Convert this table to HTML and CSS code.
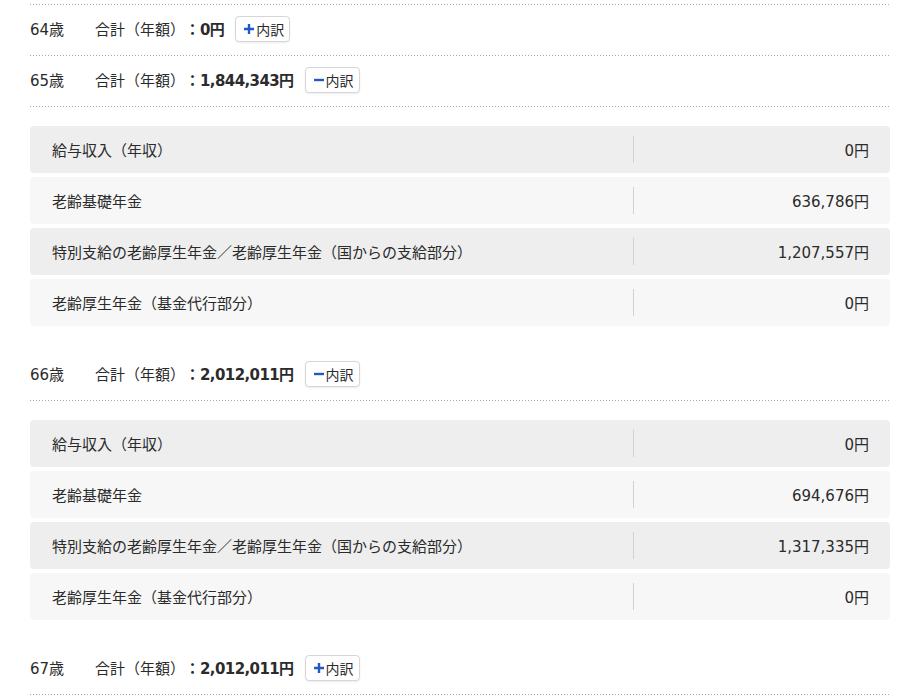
FILE: index.html
```html
<!DOCTYPE html>
<html lang="ja">
<head>
<meta charset="utf-8">
<title>年金内訳</title>
<link rel="stylesheet" href="styles.css">
</head>
<body>
<div class="page">
  <div class="sep"></div>

  <div class="head">
    <span class="age">64歳</span>
    <span class="lbl">合計（年額）</span><span class="colon">：</span><b class="amt">0円</b>
    <button class="btn"><svg class="ico" viewBox="0 0 10 10"><path d="M0 5H10M5 0V10"/></svg>内訳</button>
  </div>
  <div class="sep"></div>

  <div class="head">
    <span class="age">65歳</span>
    <span class="lbl">合計（年額）</span><span class="colon">：</span><b class="amt">1,844,343円</b>
    <button class="btn"><svg class="ico" viewBox="0 0 10 10"><path d="M0 5H10"/></svg>内訳</button>
  </div>
  <div class="sep"></div>
  <div class="table">
    <div class="row odd"><div class="name">給与収入（年収）</div><div class="val">0円</div></div>
    <div class="row even"><div class="name">老齢基礎年金</div><div class="val">636,786円</div></div>
    <div class="row odd"><div class="name">特別支給の老齢厚生年金／老齢厚生年金（国からの支給部分）</div><div class="val">1,207,557円</div></div>
    <div class="row even"><div class="name">老齢厚生年金（基金代行部分）</div><div class="val">0円</div></div>
  </div>

  <div class="head">
    <span class="age">66歳</span>
    <span class="lbl">合計（年額）</span><span class="colon">：</span><b class="amt">2,012,011円</b>
    <button class="btn"><svg class="ico" viewBox="0 0 10 10"><path d="M0 5H10"/></svg>内訳</button>
  </div>
  <div class="sep"></div>
  <div class="table">
    <div class="row odd"><div class="name">給与収入（年収）</div><div class="val">0円</div></div>
    <div class="row even"><div class="name">老齢基礎年金</div><div class="val">694,676円</div></div>
    <div class="row odd"><div class="name">特別支給の老齢厚生年金／老齢厚生年金（国からの支給部分）</div><div class="val">1,317,335円</div></div>
    <div class="row even"><div class="name">老齢厚生年金（基金代行部分）</div><div class="val">0円</div></div>
  </div>

  <div class="head">
    <span class="age">67歳</span>
    <span class="lbl">合計（年額）</span><span class="colon">：</span><b class="amt">2,012,011円</b>
    <button class="btn"><svg class="ico" viewBox="0 0 10 10"><path d="M0 5H10M5 0V10"/></svg>内訳</button>
  </div>
  <div class="sep"></div>
</div>
</body>
</html>
```

FILE: styles.css
```css
html, body {
  margin: 0;
  padding: 0;
  background: #fff;
}
body {
  font-family: "DejaVu Sans", "Noto Sans CJK JP", sans-serif;
  font-size: 15px;
  color: #2b2b2b;
}
.page {
  width: 860px;
  margin-left: 30px;
  padding-top: 4px;
}
.sep {
  height: 1px;
  background: repeating-linear-gradient(to right, #a8a8a8 0 1px, transparent 1px 3px);
}
.head {
  box-sizing: border-box;
  height: 50px;
  padding-bottom: 3px;
  display: flex;
  align-items: center;
  white-space: nowrap;
}
.age {
  width: 65px;
  flex: none;
}
.colon {
  font-weight: bold;
}
.amt {
  font-weight: bold;
  letter-spacing: -0.6px;
}
.btn {
  margin-left: 11px;
  height: 26px;
  padding: 0 5px 0 8px;
  display: inline-flex;
  align-items: center;
  background: #fff;
  border: 1px solid #d6d6d6;
  border-radius: 4px;
  box-shadow: 0 1px 2px rgba(0, 0, 0, 0.08);
  font-family: "Noto Sans CJK JP", sans-serif;
  font-size: 14px;
  color: #2b2b2b;
}
.ico {
  width: 10px;
  height: 10px;
  margin-right: 2px;
  stroke: #1f5bc6;
  stroke-width: 2.4;
  fill: none;
}
.table {
  margin: 19px 0 24px;
  display: flex;
  flex-direction: column;
  gap: 4px;
}
.row {
  height: 47px;
  display: flex;
  align-items: center;
  border-radius: 4px;
}
.odd {
  background: #eeeeee;
}
.even {
  background: #f7f7f7;
}
.name {
  flex: 1;
  padding-left: 22px;
}
.val {
  width: 235px;
  height: 27px;
  border-left: 1px solid #d2d2d2;
  display: flex;
  align-items: center;
  justify-content: flex-end;
  padding-right: 21px;
}
```
